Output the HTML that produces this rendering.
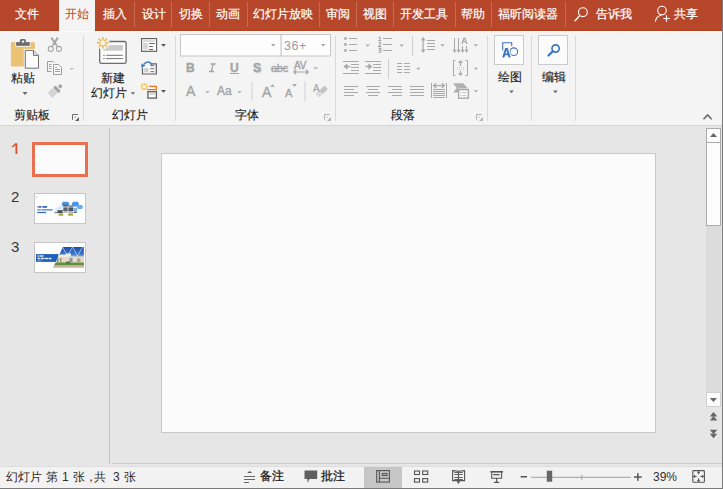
<!DOCTYPE html>
<html><head><meta charset="utf-8">
<style>
*{margin:0;padding:0;box-sizing:border-box}
html,body{width:723px;height:489px;overflow:hidden;background:#e6e6e6;font-family:"Liberation Sans",sans-serif;position:relative}
.a{position:absolute}
.t{position:absolute;white-space:nowrap;line-height:1;font-size:12px;z-index:2}
.tab{color:#fff;-webkit-text-stroke:0.2px #fff}
.gl{color:#1e1e1e;-webkit-text-stroke:0.15px #1e1e1e}
.st{color:#2e2e2e}
.ic{color:#a3a3a3;-webkit-text-stroke:0.35px #a3a3a3}
#svg{position:absolute;left:0;top:0}
</style></head><body>
<!-- backgrounds -->
<div class="a" style="left:0;top:0;width:723px;height:31px;background:#b7472a"></div>
<div class="a" style="left:59px;top:0;width:36px;height:31px;background:#f4f4f4"></div>
<div class="a" style="left:0;top:31px;width:723px;height:95px;background:#f4f4f4;border-bottom:1px solid #d5d5d5"></div>
<div class="a" style="left:0;top:466px;width:723px;height:23px;background:#f2f2f2;border-top:1px solid #dedede;border-bottom:1px solid #7a7a7a"></div>
<div class="a" style="left:364px;top:467px;width:38px;height:21px;background:#c6c6c6"></div>
<div class="a" style="left:0;top:31px;width:722px;height:1px;background:#fafafa"></div>
<div class="a" style="left:0;top:30px;width:59px;height:1px;background:#b4421f"></div><div class="a" style="left:95px;top:30px;width:627px;height:1px;background:#b4421f"></div>

<!-- tab labels -->
<div class="t tab" style="left:15px;top:8px">文件</div>
<div class="t" style="left:65px;top:8px;color:#b7472a">开始</div>
<div class="t tab" style="left:103px;top:8px">插入</div>
<div class="t tab" style="left:142px;top:8px">设计</div>
<div class="t tab" style="left:179px;top:8px">切换</div>
<div class="t tab" style="left:216px;top:8px">动画</div>
<div class="t tab" style="left:253px;top:8px">幻灯片放映</div>
<div class="t tab" style="left:326px;top:8px">审阅</div>
<div class="t tab" style="left:363px;top:8px">视图</div>
<div class="t tab" style="left:400px;top:8px">开发工具</div>
<div class="t tab" style="left:461px;top:8px">帮助</div>
<div class="t tab" style="left:498px;top:8px">福昕阅读器</div>
<div class="t tab" style="left:596px;top:8px">告诉我</div>
<div class="t tab" style="left:674px;top:8px">共享</div>

<!-- ribbon labels -->
<div class="t gl" style="left:14px;top:109px">剪贴板</div>
<div class="t gl" style="left:112px;top:109px">幻灯片</div>
<div class="t gl" style="left:235px;top:109px">字体</div>
<div class="t gl" style="left:391px;top:109px">段落</div>
<div class="t gl" style="left:11px;top:72px">粘贴</div>
<div class="t gl" style="left:101px;top:72px">新建</div>
<div class="t gl" style="left:91px;top:87px">幻灯片</div>
<div class="t gl" style="left:498px;top:71px">绘图</div>
<div class="t gl" style="left:542px;top:71px">编辑</div>
<div class="t" style="left:284px;top:40px;color:#9c9c9c;font-size:12.5px;letter-spacing:0.6px">36+</div>

<!-- font glyph icons -->
<div class="t ic" style="left:186px;top:62px;font-weight:bold;font-size:12px">B</div>
<div class="t ic" style="left:230px;top:62px;font-weight:bold;font-size:12px">U</div>
<div class="t ic" style="left:253px;top:62px;font-weight:bold;font-size:12px;text-shadow:1px 1px 1.5px #c8c8c8">S</div>
<div class="t ic" style="left:271px;top:63px;font-size:11px;letter-spacing:-0.3px">abc</div>
<div class="t ic" style="left:294px;top:61px;font-size:10px;letter-spacing:-0.3px">AV</div>
<div class="t ic" style="left:186px;top:84px;font-size:14px">A</div>
<div class="t ic" style="left:217px;top:85px;font-size:12px">Aa</div>
<div class="t ic" style="left:262px;top:85px;font-size:14px">A</div>
<div class="t ic" style="left:285px;top:88px;font-size:11px">A</div>
<div class="t ic" style="left:313px;top:84px;font-size:10px;-webkit-text-stroke:0.2px #a3a3a3">A</div>

<!-- status labels -->
<div class="t st" style="left:6px;top:471px">幻灯片</div><div class="t st" style="left:46px;top:471px">第</div><div class="t st" style="left:62px;top:471px">1</div><div class="t st" style="left:73px;top:471px">张</div><div class="t st" style="left:85px;top:471px">，</div><div class="t st" style="left:94px;top:471px">共</div><div class="t st" style="left:113px;top:471px">3</div><div class="t st" style="left:124px;top:471px">张</div>
<div class="t" style="left:260px;top:470px;color:#222;-webkit-text-stroke:0.3px #222">备注</div>
<div class="t" style="left:321px;top:470px;color:#222;-webkit-text-stroke:0.3px #222">批注</div>
<div class="t" style="left:653px;top:471px;color:#333">39%</div>

<svg id="svg" width="723" height="489" viewBox="0 0 723 489">
<!-- tab separators -->
<g fill="#c86a52">
<rect x="134" y="2" width="1" height="25"/><rect x="171" y="2" width="1" height="25"/>
<rect x="209" y="2" width="1" height="25"/><rect x="247" y="2" width="1" height="25"/>
<rect x="319" y="2" width="1" height="25"/><rect x="356" y="2" width="1" height="25"/>
<rect x="393" y="2" width="1" height="25"/><rect x="455" y="2" width="1" height="25"/>
<rect x="491" y="2" width="1" height="25"/><rect x="565" y="2" width="1" height="25"/>
</g>
<!-- search & share icons -->
<g stroke="#fff" fill="none" stroke-width="1.1">
<circle cx="582.9" cy="12.2" r="4.4"/>
<line x1="579.8" y1="15.5" x2="574.6" y2="21.3" stroke-width="1.3"/>
<circle cx="662" cy="10.6" r="4.3"/>
<path d="M655.4 21.6 C655.8 18 658 16 661 15.3"/>
<path d="M666.5 15.2 V21.8 M663.2 18.5 H669.8" stroke-width="1.2"/>
</g>

<!-- group separators -->
<g fill="#dadada">
<rect x="83" y="36" width="1" height="85"/><rect x="175" y="36" width="1" height="85"/>
<rect x="335" y="36" width="1" height="85"/><rect x="487" y="36" width="1" height="85"/>
<rect x="531" y="36" width="1" height="85"/><rect x="575" y="36" width="1" height="85"/>
</g>
<!-- dialog launchers -->
<g id="dl">
<path d="M72.5 119.8 V114.5 H77.8" stroke="#6a6a6a" stroke-width="1" fill="none"/>
<path d="M79 117 V121 H75 Z" fill="#666"/>
<rect x="74.6" y="116.6" width="1.2" height="1.2" fill="#888"/>
</g>
<g id="dl2">
<path d="M324.5 119.8 V114.5 H329.8" stroke="#b4b4b4" stroke-width="1" fill="none"/>
<path d="M331 117 V121 H327 Z" fill="#b4b4b4"/>
<rect x="326.6" y="116.6" width="1.2" height="1.2" fill="#c4c4c4"/>
</g>
<use href="#dl2" x="152" y="0"/>
<!-- paste -->
<rect x="10.9" y="41.9" width="24" height="24.7" rx="1.5" fill="#ebc174"/>
<rect x="15.2" y="40.8" width="15.4" height="6" fill="#f4f4f4"/>
<rect x="16.1" y="42.1" width="13.6" height="3.7" fill="#6b6b6b"/>
<rect x="19.9" y="39.1" width="5.9" height="4" rx="1.5" fill="#6b6b6b"/>
<rect x="21.9" y="40.6" width="2.2" height="2" fill="#f4f4f4"/>
<rect x="23.8" y="48.9" width="16.4" height="20.8" fill="#f4f4f4"/>
<path d="M25.3 50.4 H33.5 L38.5 55.4 V68.2 H25.3 Z" fill="#fbfbfb" stroke="#707070" stroke-width="1"/>
<path d="M33.5 50.4 V55.4 H38.5" fill="#e6e6e6" stroke="#707070" stroke-width="1"/>
<path d="M22.5 92 h5 l-2.5 3 z" fill="#6a6a6a"/>
<!-- scissors -->
<g stroke="#a6a6a6" fill="none">
<path d="M51.3 37.6 L56 44.6 M57.9 37.6 L53.2 44.6" stroke-width="2"/>
<path d="M55.5 44 L57.6 46.6 M53.7 44 L51.9 46.6" stroke-width="1.3"/>
<circle cx="50.8" cy="48.9" r="2.5" stroke-width="1.1"/><circle cx="58.9" cy="48.9" r="2.5" stroke-width="1.1"/>
</g>
<!-- copy -->
<path d="M51.5 71.5 H47.5 V61.5 H53 L54 62.5" fill="none" stroke="#9c9c9c" stroke-width="1"/>
<g fill="#a0a0a0"><rect x="49" y="64" width="2.5" height="1"/><rect x="49" y="66" width="2.5" height="1"/><rect x="49" y="68" width="2.5" height="1"/></g>
<path d="M53.5 64.5 H58.5 L61.5 67.5 V74.5 H53.5 Z" fill="#f8f8f8" stroke="#9c9c9c" stroke-width="1"/>
<g fill="#a0a0a0"><rect x="55" y="67" width="2" height="1"/><rect x="55" y="69" width="5" height="1"/><rect x="55" y="71" width="5" height="1"/></g>
<path d="M69.6 68 h4.4 l-2.2 2 z" fill="#b9b9b9"/>
<!-- format painter -->
<g transform="translate(55.5 90.5) rotate(-45)">
<rect x="-7.5" y="-3.8" width="7.2" height="7" fill="#d4d4d4"/>
<rect x="0.3" y="-3.6" width="3.2" height="7.6" rx="0.6" fill="#a3a3a3"/>
<rect x="4.6" y="-1.3" width="3.4" height="3.4" rx="0.6" fill="#a3a3a3"/>
</g>

<!-- new slide -->
<rect x="99.7" y="41.5" width="26.4" height="21.8" rx="1.6" fill="#fdfdfd" stroke="#6e6e6e" stroke-width="1.3"/>
<rect x="103.2" y="45.1" width="19.6" height="5.6" fill="#cbcbcb"/>
<g fill="#808080">
<rect x="103.2" y="54.8" width="1.6" height="1.1"/><rect x="106.1" y="54.8" width="16.7" height="1.1"/>
<rect x="103.2" y="58" width="1.6" height="1.1"/><rect x="106.1" y="58" width="16.7" height="1.1"/>
</g>
<circle cx="102.8" cy="42.8" r="6.8" fill="#f4f4f4"/>
<g stroke="#ecbe66" stroke-width="1.9" stroke-linecap="butt">
<path d="M102.8 37 V40.5 M102.8 45.1 V48.6 M97 42.8 H100.5 M105.1 42.8 H108.6 M98.7 38.7 L101.2 41.2 M104.4 44.4 L106.9 46.9 M106.9 38.7 L104.4 41.2 M101.2 44.4 L98.7 46.9"/>
</g>
<path d="M130.8 92.3 h4.2 l-2.1 2.4 z" fill="#6a6a6a"/>
<!-- layout -->
<rect x="141.6" y="38.6" width="15" height="12.7" fill="#fdfdfd" stroke="#5a5a5a" stroke-width="1.1"/>
<rect x="143.2" y="40.2" width="11.6" height="1.6" fill="#d4d4d4"/>
<rect x="143.2" y="42.9" width="4.5" height="6.6" fill="#d4d4d4"/>
<g fill="#6a6a6a"><rect x="149.1" y="43" width="5.7" height="1"/><rect x="149.1" y="46" width="3.9" height="1"/><rect x="149.1" y="49" width="3.9" height="1"/></g>
<path d="M161 44 h5 l-2.5 2.8 z" fill="#555"/>
<!-- reset -->
<path d="M151.8 63.8 H156.3 V74 H142.5 V67.9" fill="#fdfdfd" stroke="#5f5f5f" stroke-width="1.2"/>
<rect x="144.2" y="67.9" width="4.5" height="4.5" fill="#cfcfcf"/>
<g fill="#6a6a6a"><rect x="150.3" y="65.2" width="4" height="1"/><rect x="150.3" y="68.2" width="4" height="1"/><rect x="150.3" y="71.2" width="4" height="1"/></g>
<path d="M151.6 65 C151 61.6 146.3 60.6 143.8 64.4" fill="none" stroke="#3d7ac2" stroke-width="1.6"/>
<path d="M141.3 67.9 L141.5 63.4 L145.5 65.5 Z" fill="#3d7ac2"/>
<!-- section -->
<circle cx="144.2" cy="86.6" r="4.4" fill="#f4f4f4"/>
<g stroke="#f0bd5e" stroke-width="1.4">
<path d="M144.2 83 V85 M144.2 88.2 V90.2 M140.6 86.6 H142.6 M145.8 86.6 H147.8 M141.6 84 L143 85.4 M145.4 87.8 L146.8 89.2 M146.8 84 L145.4 85.4 M143 87.8 L141.6 89.2"/>
</g>
<path d="M149.1 86.4 H156.4 V89.7 H147.3" fill="none" stroke="#e8731f" stroke-width="1.2"/>
<rect x="147.9" y="91.7" width="8.5" height="6.4" fill="#fdfdfd" stroke="#5f5f5f" stroke-width="1.3"/>
<rect x="149.6" y="93.3" width="5.2" height="1.4" fill="#c2c2c2"/>
<path d="M161 90.1 h5 l-2.5 2.6 z" fill="#555"/>

<!-- font boxes -->
<rect x="180.5" y="34.5" width="150" height="21.5" fill="#fdfdfd" stroke="#c6c6c6" stroke-width="1"/>
<rect x="280.5" y="35" width="1.2" height="21" fill="#c6c6c6"/>
<path d="M271 44 h4.6 l-2.3 2.5 z M321 44 h4.6 l-2.3 2.5 z" fill="#a6a6a6"/>
<rect x="230" y="73" width="9" height="1" fill="#a3a3a3"/>
<path d="M210.8 64 H215.6 M209 71.5 H214 M213.2 64 L211.4 71.5" stroke="#a3a3a3" stroke-width="1.3" fill="none"/>
<rect x="270.5" y="68" width="17" height="1" fill="#a6a6a6"/>
<g stroke="#a6a6a6" fill="none" stroke-width="1">
<path d="M293.8 72 H308.3 M296.2 69.7 L293.8 72 L296.2 74.3 M305.9 69.7 L308.3 72 L305.9 74.3" stroke-width="1.2"/>
</g>
<path d="M313.2 67.2 h5 l-2.5 2.2 z M205 91 h4.8 l-2.4 2.2 z M237 91 h4.8 l-2.4 2.2 z" fill="#b6b6b6"/>
<rect x="251.5" y="81.5" width="1" height="19.5" fill="#d2d2d2"/>
<rect x="304.5" y="81.5" width="1" height="19.5" fill="#d2d2d2"/>
<path d="M270.2 86.7 l2.35 -2.5 l2.35 2.5 z M292.2 84.1 h4.7 l-2.35 2.7 z" fill="#a6a6a6"/>
<g transform="translate(321.8 91.4) rotate(-42)">
<rect x="-6.8" y="-2.8" width="5.2" height="5.6" rx="1" fill="#d9d9d9" stroke="#f4f4f4" stroke-width="0.8"/>
<rect x="-1.8" y="-2.8" width="8.2" height="5.6" rx="1.2" fill="#c4c4c4" stroke="#f4f4f4" stroke-width="0.8"/>
</g>

<!-- paragraph icons -->
<g fill="#a9a9a9">
<circle cx="345.5" cy="38.5" r="1.4"/><circle cx="345.5" cy="44.5" r="1.4"/><circle cx="345.5" cy="50.5" r="1.4"/>
<rect x="349" y="38" width="8" height="1"/><rect x="349" y="44" width="8" height="1"/><rect x="349" y="50" width="8" height="1"/>
<rect x="383" y="38" width="9" height="1"/><rect x="383" y="44" width="9" height="1"/><rect x="383" y="50" width="9" height="1"/>
<!-- decrease / increase indent -->
<rect x="343" y="61" width="16" height="1"/><rect x="351" y="64" width="8" height="1"/><rect x="351" y="67" width="8" height="1"/><rect x="351" y="70" width="8" height="1"/><rect x="343" y="73" width="16" height="1"/>
<rect x="365" y="61" width="16" height="1"/><rect x="373" y="64" width="8" height="1"/><rect x="373" y="67" width="8" height="1"/><rect x="373" y="70" width="8" height="1"/><rect x="365" y="73" width="16" height="1"/>
<!-- columns -->
<rect x="397" y="63" width="5" height="1"/><rect x="397" y="66" width="5" height="1"/><rect x="397" y="69" width="5" height="1"/><rect x="397" y="72" width="5" height="1"/>
<rect x="404" y="63" width="6" height="1"/><rect x="404" y="66" width="6" height="1"/><rect x="404" y="69" width="6" height="1"/><rect x="404" y="72" width="6" height="1"/>
<!-- align left/center/right/justify -->
<rect x="344" y="86" width="14" height="1"/><rect x="344" y="89" width="10" height="1"/><rect x="344" y="92" width="14" height="1"/><rect x="344" y="95" width="10" height="1"/>
<rect x="366" y="86" width="14" height="1"/><rect x="368" y="89" width="10" height="1"/><rect x="366" y="92" width="14" height="1"/><rect x="368" y="95" width="10" height="1"/>
<rect x="388" y="86" width="14" height="1"/><rect x="392" y="89" width="10" height="1"/><rect x="388" y="92" width="14" height="1"/><rect x="392" y="95" width="10" height="1"/>
<rect x="410" y="86" width="14" height="1"/><rect x="410" y="89" width="14" height="1"/><rect x="410" y="92" width="14" height="1"/><rect x="410" y="95" width="14" height="1"/>
<!-- distributed -->
<rect x="431" y="83" width="1" height="15"/><rect x="446" y="83" width="1" height="15"/>
<rect x="433" y="89" width="12" height="1"/><rect x="433" y="91" width="12" height="1"/><rect x="433" y="93" width="12" height="1"/><rect x="433" y="95" width="12" height="1"/><rect x="433" y="97" width="12" height="1"/>
<!-- line spacing lines -->
<rect x="427" y="40" width="8" height="1"/><rect x="427" y="43" width="8" height="1"/><rect x="427" y="46" width="8" height="1"/><rect x="427" y="49" width="8" height="1"/>
<rect x="422.5" y="39" width="1.2" height="12"/>
<path d="M420.8 40.5 L423.1 36.8 L425.4 40.5 Z M420.8 49.5 L423.1 53.1 L425.4 49.5 Z"/>
<!-- text direction -->
<rect x="454" y="38" width="1" height="12.5"/><rect x="458" y="38" width="1" height="12.5"/><rect x="462" y="46" width="1" height="4.5"/><rect x="466" y="46" width="1" height="4.5"/>
<path d="M452.5 49.8 h4 l-2 3.2 z M456.5 49.8 h4 l-2 3.2 z M460.5 49.8 h4 l-2 3.2 z M464.5 49.8 h4 l-2 3.2 z"/>
<path d="M461.3 44 L463.6 37.4 H465.3 L467.6 44 H466.2 L465.6 42.2 H463.3 L462.7 44 Z M463.7 41 H465.2 L464.45 38.8 Z" fill-rule="evenodd"/>
<!-- arrows -->
<path d="M365.5 44.5 h4.4 l-2.2 2.3 z M399.5 44.5 h4.4 l-2.2 2.3 z M440.2 44.3 h4.5 l-2.25 2.3 z M473.5 44.3 h4.5 l-2.25 2.3 z M416.3 67.8 h4.2 l-2.1 2.3 z M473.8 67.8 h4.2 l-2.1 2.3 z M473.8 90.3 h4.2 l-2.1 2.3 z"/>
<rect x="388" y="59" width="1" height="20" fill="#d0d0d0"/>
<rect x="412" y="36" width="1" height="20" fill="#d0d0d0"/>
<!-- indent arrows -->
<path d="M343.3 66.5 L347.5 63.3 V65.7 H350.3 V67.3 H347.5 V69.7 Z"/>
<path d="M372.5 66.5 L368.3 63.3 V65.7 H365.5 V67.3 H368.3 V69.7 Z"/>
<!-- numbering digits -->
<path d="M378.6 37.9 L380 37.1 V40.8 M378.5 40.6 H381.3 M378.7 43.4 C379 42.3 381.1 42.4 381 43.7 C380.9 44.8 378.6 45.6 378.5 46.6 H381.3 M378.5 48.7 H381.1 L379.5 50.3 C381.7 50.3 381.6 52.9 378.5 52.3" stroke="#a6a6a6" stroke-width="1.05" fill="none"/>
</g>
<g stroke="#a9a9a9" fill="none" stroke-width="1">
<!-- align text box -->
<path d="M455.5 60.5 H453.5 V75.5 H455.5 M465.5 60.5 H467.5 V75.5 H465.5"/>
<path d="M457 67.5 H464 M457 69.5 H464" stroke="#c8c8c8" stroke-dasharray="1 1"/>
</g>
<g fill="#a9a9a9">
<rect x="459.9" y="62" width="1.2" height="4"/><path d="M458 63 L460.5 60 L463 63 Z"/>
<rect x="459.9" y="71" width="1.2" height="3.5"/><path d="M458 73.3 L460.5 76 L463 73.3 Z"/>
<path d="M436.2 83.3 L433.6 85.6 L436.2 87.9 M441.8 83.3 L444.4 85.6 L441.8 87.9" fill="none" stroke="#a9a9a9" stroke-width="1.3"/><rect x="434" y="85" width="10" height="1.2"/>
</g>
<!-- smartart -->
<path d="M453 83.2 H463.1 L468 88.5 H458 V92.6 H453 L456.8 88 Z" fill="#b0b0b0"/>
<rect x="458.6" y="89.6" width="9.8" height="8.6" fill="#f8f8f8" stroke="#a6a6a6" stroke-width="1.3"/>
<g fill="#d2c4b8"><rect x="460.5" y="92" width="1" height="1"/><rect x="460.5" y="95" width="1" height="1"/></g><g fill="#c8c8c8"><rect x="462.5" y="92" width="4" height="1"/><rect x="462.5" y="95" width="4" height="1"/></g>

<!-- drawing / editing -->
<rect x="494.5" y="35.5" width="29" height="29" fill="#fbfbfb" stroke="#cbcbcb"/>
<rect x="538.5" y="35.5" width="29" height="29" fill="#fbfbfb" stroke="#cbcbcb"/>
<path d="M502.7 50.5 V42.7 H511.7 V46" fill="none" stroke="#3e74b8" stroke-width="1.1"/>
<circle cx="513.8" cy="51.7" r="3.8" fill="none" stroke="#3e74b8" stroke-width="1.1"/>
<path d="M502.2 57.6 L505.2 48.1 H507.7 L510.7 57.6 H508.6 L507.9 55.2 H505 L504.3 57.6 Z" fill="none" stroke="#fbfbfb" stroke-width="2"/>
<path d="M502.2 57.6 L505.2 48.1 H507.7 L510.7 57.6 H508.6 L507.9 55.2 H505 L504.3 57.6 Z M505.5 53.4 H507.4 L506.45 50.3 Z" fill="#3e74b8" fill-rule="evenodd"/>
<circle cx="555.6" cy="48.5" r="3.6" fill="none" stroke="#3e77bb" stroke-width="1.7"/>
<line x1="552.8" y1="51.3" x2="548.5" y2="55.5" stroke="#3e77bb" stroke-width="2.3" stroke-linecap="round"/>
<path d="M509.2 90.6 h4.6 l-2.3 2.6 z M553.1 90.6 h4.6 l-2.3 2.6 z" fill="#6a6a6a"/>
<path d="M703.5 119.3 L707.6 115 L711.7 119.3" fill="none" stroke="#6a6a6a" stroke-width="1.6"/>

<!-- main area -->
<rect x="109" y="128" width="1" height="336" fill="#c4c4c4"/>
<rect x="112" y="463" width="610" height="1" fill="#cacaca"/>
<rect x="161.5" y="153.5" width="494" height="279" fill="#fbfbfb" stroke="#c8c8c8"/>
<!-- thumbnails -->
<rect x="33.5" y="143.5" width="53" height="32" fill="#fbfbfb" stroke="#e9704e" stroke-width="3"/>
<rect x="34.5" y="193.5" width="51" height="30" fill="#fdfdfd" stroke="#c6c6c6"/>
<rect x="34.5" y="242.5" width="51" height="30" fill="#fdfdfd" stroke="#c6c6c6"/>
<!-- thumb 2 content -->
<rect x="36" y="196.5" width="1" height="1.5" fill="#a8c0e8"/>
<g fill="#3a68c0">
<rect x="37.3" y="206" width="1.2" height="1.8" fill="#c87850"/><rect x="38.8" y="206" width="2.6" height="1.8"/><rect x="42.4" y="206" width="4.6" height="1.8"/>
<rect x="37.3" y="209.1" width="3.6" height="1.5" fill="#6a90d4"/><rect x="41.6" y="209.1" width="11" height="1.5" fill="#6a90d4"/>
<rect x="37.3" y="211.9" width="8.8" height="1.2" fill="#3464bc"/>
</g>
<path d="M54.3 211.5 L56.5 208 L60 206 L62 205 L62.5 211 L55 212.5 Z" fill="#d6e8fa"/>
<path d="M62.9 201.7 H68.1 L69.5 204 L68.1 206.5 H62.9 L61.5 204 Z" fill="#4a94ea"/>
<path d="M73 201.7 H77.8 L79.2 204 L77.8 206.5 H73 L71.6 204 Z" fill="#4a94ea"/>
<path d="M77.8 205 H82 L83 207 L82 209 H77.8 L76.8 207 Z" fill="#6aaaf0"/>
<rect x="57.5" y="210.2" width="5.5" height="2.8" fill="#46505c"/>
<rect x="63.3" y="204.5" width="4.4" height="8" fill="#5a6470"/>
<rect x="68.4" y="205.5" width="4.8" height="7" fill="#4a5664"/>
<rect x="73.3" y="207.8" width="3.8" height="4.2" fill="#88b2de"/>
<rect x="63" y="206.6" width="10.5" height="0.8" fill="#e2eaf2"/>
<rect x="62" y="211.4" width="12" height="0.8" fill="#eef2f6"/>
<rect x="58.6" y="213.4" width="4.6" height="2.3" fill="#aea23a"/>
<rect x="68.2" y="213.4" width="4.8" height="2.3" fill="#aea23a"/>
<rect x="54.5" y="212.2" width="3.5" height="1" fill="#6a7078"/>
<rect x="73.5" y="212" width="3.5" height="1" fill="#6a7078"/>
<!-- thumb 3 content -->
<defs><linearGradient id="sky" x1="0" y1="0" x2="0" y2="1"><stop offset="0" stop-color="#1d4ea8"/><stop offset="0.35" stop-color="#3c78cc"/><stop offset="0.5" stop-color="#b8d0ec"/></linearGradient>
<clipPath id="pg"><path d="M62.9 247 H83.8 V267.5 H53.2 Z"/></clipPath></defs>
<rect x="36" y="254.1" width="22.4" height="7.8" fill="#2060bb"/>
<g fill="#e8eef8"><rect x="37.5" y="255.3" width="2" height="1.4"/><rect x="40" y="255.3" width="3.5" height="1.4"/><rect x="37.5" y="257.8" width="3" height="1.4"/><rect x="41" y="257.8" width="3" height="1.4"/><rect x="44.5" y="257.8" width="4" height="1.4"/><rect x="49" y="257.8" width="2.5" height="1.4"/></g>
<rect x="37.5" y="260.5" width="4" height="0.8" fill="#9ab8e4"/>
<g clip-path="url(#pg)">
<rect x="53" y="247" width="31" height="21" fill="url(#sky)"/>
<rect x="55" y="256.5" width="29" height="6.5" fill="#e6dcc4"/>
<rect x="58" y="254.5" width="10" height="2.5" fill="#f2ead8"/>
<rect x="66" y="253.5" width="5" height="3" fill="#f4eee0"/>
<rect x="57" y="258" width="1.5" height="4.5" fill="#8c8a7c"/><rect x="60" y="258" width="1.5" height="4.5" fill="#9a9684"/>
<rect x="69.5" y="258" width="3" height="4" fill="#7f96b0"/><rect x="77" y="258.5" width="3.5" height="3.5" fill="#aaa290"/>
<rect x="53" y="262.5" width="31" height="2.5" fill="#5f8f42"/>
<rect x="66" y="261.5" width="4" height="2" fill="#4a7a32"/>
<rect x="53" y="265" width="31" height="3" fill="#c9ad94"/>
<path d="M62.5 247 L67.5 256 L72.5 247 L77.5 256 L82.5 247" fill="none" stroke="#e8f0fa" stroke-width="0.6"/>
</g>

<!-- scrollbar -->
<rect x="706" y="226" width="15" height="166" fill="#dcdcdc"/>
<rect x="706.5" y="128.5" width="14" height="14" fill="#fcfcfc" stroke="#ababab"/>
<rect x="706.5" y="142.5" width="14" height="83" fill="#fcfcfc" stroke="#ababab"/>
<rect x="706.5" y="392.5" width="14" height="14" fill="#fcfcfc" stroke="#d0d0d0"/>
<path d="M710 137 H717 L713.5 133 Z" fill="#666"/>
<path d="M709.8 398 H717 L713.4 402 Z" fill="#666"/>
<path d="M709.8 416.5 H717.3 L713.5 412 Z M709.8 420.5 H717.3 L713.5 416 Z" fill="#666"/>
<path d="M709.8 429.8 H717.3 L713.5 434.3 Z M709.8 433.8 H717.3 L713.5 438.3 Z" fill="#666"/>

<!-- status icons -->
<g fill="#555">
<path d="M247.2 473 L249.7 471 L252.2 473 Z"/>
<rect x="244" y="476" width="11" height="1" fill="#666"/><rect x="244" y="479" width="11" height="1" fill="#666"/><rect x="244" y="482" width="5" height="1" fill="#666"/>
<path d="M304.5 470.5 H317.2 V479 H309.5 L307.5 483 V479 H304.5 Z" fill="#5f5f5f"/>
</g>
<g stroke="#555" fill="none" stroke-width="1.1">
<rect x="376.7" y="470.6" width="12.7" height="11.5"/>
<path d="M379.4 470.6 V482.1 M379.4 478.3 H389.4"/>
<rect x="382.3" y="473.5" width="4.6" height="2"/>
<rect x="414.5" y="471" width="5" height="3.5"/><rect x="422.7" y="471" width="5" height="3.5"/>
<rect x="414.5" y="478.6" width="5" height="3.5"/><rect x="422.7" y="478.6" width="5" height="3.5"/>
<path d="M452.6 470.6 L458.4 471.3 L464.6 470.6 V480.6 H458.4 H452.6 Z M458.4 471.3 V481.5"/>
<path d="M454.3 472.5 H462.8 M454.3 474.5 H462.8 M454.3 477.5 H462.8 M454.3 479.5 H462.8" stroke-width="0.9"/>
<path d="M457.2 481.2 L458.4 482.9 L459.6 481.2" stroke-width="1.2"/>
<path d="M491.7 472.3 V478.2 H501.6 V472.3 M493.2 474.6 H499.6 M496.6 478.2 V482.3 M494 482.4 H499.2"/>
<rect x="692.8" y="470.6" width="11.6" height="11.6" rx="0.8"/>
<path d="M698.6 470.6 V474.4 M697.2 472.4 H700 M698.6 482.2 V478.3 M697.2 480.4 H700 M692.8 476.4 H696.7 M694.6 475 V477.8 M704.4 476.4 H700.4 M702.4 475 V477.8" stroke-width="1"/>
</g>
<rect x="490.4" y="471" width="12.6" height="1.6" fill="#555"/>
<g fill="#555">
<rect x="520.6" y="476" width="6.4" height="1.5"/>
<rect x="531" y="476.8" width="100" height="1" fill="#a0a0a0"/>
<rect x="581.3" y="474.8" width="1" height="5" fill="#a0a0a0"/>
<rect x="546.8" y="470.7" width="5.4" height="11" fill="#666"/>
<rect x="634" y="476.3" width="7.7" height="1.5"/><rect x="637.1" y="473.2" width="1.5" height="7.6"/>
</g>
<!-- right border -->
<rect x="722" y="0" width="1" height="489" fill="#7a7a7a"/>
</svg>

<!-- slide numbers -->
<svg class="a" style="left:0;top:0;z-index:3" width="30" height="160"><path d="M16.4 143.3 V154" stroke="#d4502c" stroke-width="1.8" fill="none"/><path d="M12.2 147 L16.3 143.6" stroke="#d4502c" stroke-width="1.5" fill="none"/></svg>
<div class="t" style="left:11px;top:189px;font-size:15px;color:#383838">2</div>
<div class="t" style="left:11px;top:239px;font-size:15px;color:#383838">3</div>
</body></html>
